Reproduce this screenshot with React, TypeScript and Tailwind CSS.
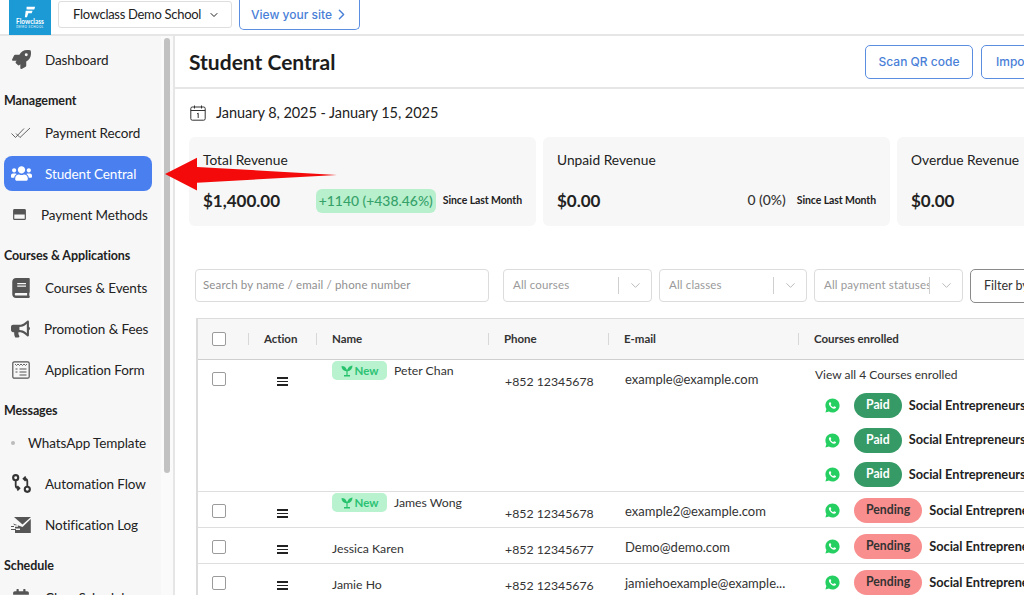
import { ChevronDown, ChevronRight } from 'lucide-react';
import { FaBook, FaBullhorn, FaCalendarAlt, FaRocket, FaUsers } from 'react-icons/fa';
import { RiWhatsappFill } from 'react-icons/ri';

function CheckIcon() {
  return (
    <svg viewBox="0 0 20 12" className="h-[12px] w-[20px]" fill="none" stroke="#555" strokeWidth="0.9">
      <path d="M0.500 6.500l4 4L13 1.500" />
      <path d="M5 6.500l4 4L19 1" />
    </svg>
  );
}

function CardIcon() {
  return (
    <svg viewBox="0 0 14 12" className="h-[11px] w-[13px]" fill="#555">
      <path d="M1.500 0h11A1.500 1.500 0 0 1 14 1.500v9a1.500 1.500 0 0 1-1.500 1.500h-11A1.500 1.500 0 0 1 0 10.500v-9A1.500 1.500 0 0 1 1.500 0zM1.300 6v4.700h11.400V6z" />
    </svg>
  );
}

function FormIcon() {
  return (
    <svg viewBox="0 0 18 18" className="h-[18px] w-[18px]" fill="none" stroke="#555" strokeWidth="1.2">
      <rect x="0.800" y="0.800" width="16.400" height="16.400" rx="1.500" />
      <path d="M3 3l1.500 1.500L6 3l1.500 1.500L9 3l1.500 1.500L12 3l1.500 1.500L15 3" strokeWidth="0.9" />
      <path d="M3.500 8h2M7.500 8h7M3.500 11h2M7.500 11h7M7.500 14h7" />
    </svg>
  );
}

function FlowIcon() {
  return (
    <svg viewBox="0 0 18 18" className="h-[19px] w-[19px]" fill="none" stroke="#333" strokeWidth="2">
      <circle cx="3.500" cy="3.500" r="2.400" />
      <circle cx="14.500" cy="14.500" r="2.400" />
      <path d="M3.500 6v5q0 2.500 2.500 2.500h1M5 11.500l2 2-2 2" strokeWidth="1.700" />
      <path d="M14.500 12V7q0-2.500-2.500-2.500h-1M13 2.500l-2 2 2 2" strokeWidth="1.700" />
    </svg>
  );
}

function MailIcon() {
  return (
    <svg viewBox="0 0 20 16" className="h-[16px] w-[20px]" fill="#555">
      <path d="M3 0h17L11.500 7.500z" />
      <path d="M19.800 2v14H4v-3h5v-1.500H4V9.800h3V8.300H3.500L2 6.500l9.500 3.500z" />
      <path d="M0 9h3v1H0zM0 12h5v1H0z" />
    </svg>
  );
}

function SproutIcon() {
  return (
    <svg viewBox="0 0 12 12" className="h-[12px] w-[12px]" fill="#27c26c">
      <path d="M0.500 1C3 1 5 2 5.500 4.500h1C7 2 9 1 11.500 0.500 11.500 4 9.500 6 6.600 6.200V10H9v1.500H3V10h2.400V6.200C2.500 6 0.500 4 0.500 1z" />
    </svg>
  );
}

function HamburgerIcon() {
  return (
    <div className="flex w-[11px] flex-col gap-[2px]">
      <div className="h-[1.5px] bg-[#222]" />
      <div className="h-[1.5px] bg-[#222]" />
      <div className="h-[1.5px] bg-[#222]" />
    </div>
  );
}

function Box() {
  return <div className="h-[14px] w-[14px] rounded-[2px] border-[1.5px] border-[#9b9b9b] bg-white" />;
}

function NavItem({ icon, label, gap = 'w-[41px]', active = false }: { icon: React.ReactNode; label: string; gap?: string; active?: boolean }) {
  return (
    <div className={`flex h-[35px] shrink-0 items-center rounded-lg text-[13.5px] tracking-[-0.1px] ${active ? 'bg-[#4a7ff0] text-white' : 'text-[#222]'}`}>
      <div className={`flex shrink-0 items-center justify-center pr-[7px] ${gap}`}>{icon}</div>
      <span className="pt-[2px] whitespace-nowrap">{label}</span>
    </div>
  );
}

function Heading({ children }: { children: React.ReactNode }) {
  return (
    <div className="mt-[6px] -mb-[4px] flex h-[24px] shrink-0 items-center text-[12.5px] font-bold tracking-[-0.1px] whitespace-nowrap text-[#222]">
      {children}
    </div>
  );
}

function Sidebar() {
  return (
    <aside className="flex w-[175px] shrink-0 border-r-2 border-[#e6e6e6] bg-[#f7f7f7]">
      <nav className="flex w-[161px] shrink-0 flex-col gap-[6px] overflow-hidden pt-[6px] pl-[4px] pr-[9px]">
        <NavItem icon={<FaRocket className="h-[19px] w-[19px] text-[#555]" />} label="Dashboard" />
        <Heading>Management</Heading>
        <NavItem icon={<CheckIcon />} label="Payment Record" />
        <NavItem icon={<FaUsers className="h-[21px] w-[21px] text-white" />} label="Student Central" active />
        <NavItem icon={<CardIcon />} label="Payment Methods" gap="w-[37px]" />
        <Heading>Courses &amp; Applications</Heading>
        <NavItem icon={<FaBook className="h-[20px] w-[18px] text-[#555]" />} label="Courses & Events" />
        <NavItem icon={<FaBullhorn className="h-[18px] w-[19px] text-[#555]" />} label="Promotion & Fees" gap="w-[40px]" />
        <NavItem icon={<FormIcon />} label="Application Form" />
        <Heading>Messages</Heading>
        <NavItem icon={<div className="h-[4px] w-[4px] rounded-full bg-[#bbb]" />} label="WhatsApp Template" gap="w-[24px]" />
        <NavItem icon={<FlowIcon />} label="Automation Flow" />
        <NavItem icon={<MailIcon />} label="Notification Log" />
        <Heading>Schedule</Heading>
        <NavItem icon={<FaCalendarAlt className="h-[18px] w-[18px] text-[#555]" />} label="Class Schedule" />
      </nav>
      <div className="w-[12px] shrink-0 bg-[#fafafa] pt-[2px] pl-[3px]">
        <div className="h-[435px] w-[6px] rounded-full bg-[#c2c2c2]" />
      </div>
    </aside>
  );
}

function TopBar() {
  return (
    <header className="flex h-[36px] shrink-0 items-start gap-[7px] border-b-2 border-[#e6e6e6] bg-white pl-[9px]">
      <div className="flex h-[35px] w-[42px] shrink-0 flex-col items-center justify-end bg-[#1b9ad6] pb-[6px] text-white">
        <svg viewBox="0 0 14 14" className="h-[12px] w-[12px]" fill="white">
          <path d="M3 1h10l-1 3H3zM2 5.500h8l-1 3H5L3.500 13H1z" />
        </svg>
        <div className="text-[6.5px] font-bold leading-[7px]">Flowclass</div>
        <div className="text-[3px] leading-[4px] tracking-[0.5px] whitespace-nowrap">DEMO SCHOOL</div>
      </div>
      <div className="mt-[1px] flex h-[27px] w-[174px] shrink-0 items-center gap-[7px] rounded-[3px] border border-[#dedede] pl-[14px] text-[13px] tracking-[-0.3px] text-[#222]">
        <span className="whitespace-nowrap">Flowclass Demo School</span>
        <ChevronDown className="h-[12px] w-[12px] shrink-0" />
      </div>
      <div className="flex h-[30px] w-[121px] shrink-0 items-center justify-between rounded-b-[5px] border border-t-0 border-[#5b8de0] pl-[11px] pr-[9px] font-['Inter',sans-serif] text-[12px] font-medium text-[#4a7fd8]">
        <span className="whitespace-nowrap">View your site</span>
        <ChevronRight className="h-[17px] w-[17px] shrink-0" />
      </div>
    </header>
  );
}

function StatCard({ title, value, delta, positive = false }: { title: string; value: string; delta?: string; positive?: boolean }) {
  return (
    <div className="flex h-[89px] w-[347px] shrink-0 flex-col rounded-md bg-[#f7f7f7] px-[14px] pt-[14px]">
      <div className="text-[13.75px] leading-[18px] whitespace-nowrap text-[#222]">{title}</div>
      <div className="mt-[19px] flex h-[25px] items-center">
        <span className="text-[17px] font-bold text-[#222]">{value}</span>
        {delta && (
          <div className="ml-auto flex items-center gap-[7px]">
            <span className={positive ? 'rounded-md bg-[#b8efcd] px-[3px] py-[3px] text-[13.9px] leading-[18px] font-medium text-[#35a26a]' : 'pr-[4px] text-[13.9px] font-medium text-[#333]'}>
              {delta}
            </span>
            <span className="pt-[1px] text-[10.5px] font-bold tracking-[-0.1px] whitespace-nowrap text-[#222]">Since Last Month</span>
          </div>
        )}
      </div>
    </div>
  );
}

function SelectBox({ label, width }: { label: string; width: string }) {
  return (
    <div className={`flex h-[33px] shrink-0 items-center rounded-[4px] border border-[#dcdcdc] text-[11.5px] tracking-[0.15px] text-[#9a9a9a] ${width}`}>
      <span className="min-w-0 flex-1 overflow-hidden pb-[1px] pl-[9px] whitespace-nowrap">{label}</span>
      <div className="h-[17px] w-px shrink-0 bg-[#cfcfcf]" />
      <div className="flex w-[32px] shrink-0 justify-center">
        <ChevronDown className="h-[15px] w-[15px] text-[#b5b5b5]" strokeWidth={1.5} />
      </div>
    </div>
  );
}

const COLS = 'grid grid-cols-[50px_68px_172px_120px_190px_400px]';

function HeadCell({ children }: { children: React.ReactNode }) {
  return (
    <div className="flex items-center">
      <div className="h-[12px] w-px bg-[#d8d8d8]" />
      <div className="pl-[15px] text-[11.5px] font-bold tracking-[-0.05px] whitespace-nowrap text-[#333]">{children}</div>
    </div>
  );
}

function CourseLine({ status }: { status: 'Paid' | 'Pending' }) {
  return (
    <div className="flex items-center">
      <div className="flex w-[43px] shrink-0 justify-end">
        <RiWhatsappFill className="h-[17px] w-[17px] text-[#25cf62]" />
      </div>
      <div
        className={`ml-[13px] flex h-[25px] items-center rounded-full px-[12px] text-[12.25px] font-bold ${
          status === 'Paid' ? 'bg-[#359a66] text-white' : 'bg-[#f98e8e] text-[#333]'
        }`}
      >
        {status}
      </div>
      <span className="ml-[7px] text-[12.75px] font-bold whitespace-nowrap text-[#222]">Social Entrepreneurship</span>
    </div>
  );
}

function NewBadge() {
  return (
    <div className="flex h-[19px] w-[55px] items-center justify-center gap-[2px] rounded-[5px] bg-[#b8f2cf] text-[11.5px] font-bold text-[#2cc274]">
      <SproutIcon />
      New
    </div>
  );
}

type Row = { name: string; isNew?: boolean; phone: string; email: string };

const ROWS: Row[] = [
  { name: 'James Wong', isNew: true, phone: '+852 12345678', email: 'example2@example.com' },
  { name: 'Jessica Karen', phone: '+852 12345677', email: 'Demo@demo.com' },
  { name: 'Jamie Ho', phone: '+852 12345676', email: 'jamiehoexample@example...' },
];

function RowCells({ row }: { row: Row }) {
  return (
    <>
      <div className="pt-[12px] pl-[14px]">
        <Box />
      </div>
      <div className="flex justify-center pt-[17px]">
        <HamburgerIcon />
      </div>
      <div className="flex items-start gap-[7px] pl-[16px] text-[12.25px] text-[#333]">
        {row.isNew ? (
          <>
            <div className="pt-[1px]">
              <NewBadge />
            </div>
            <span className="pt-[2px] whitespace-nowrap">{row.name}</span>
          </>
        ) : (
          <span className="pt-[12px] whitespace-nowrap">{row.name}</span>
        )}
      </div>
      <div className="pt-[13px] pl-[17px] text-[12.3px] whitespace-nowrap text-[#333]">{row.phone}</div>
      <div className="pt-[10px] pl-[17px] text-[13px] whitespace-nowrap text-[#333]">{row.email}</div>
    </>
  );
}

function StudentTable() {
  return (
    <div className="mt-[15px] ml-[1px] w-[900px] border-l-2 border-t border-[#dcdcdc]">
      <div className={`${COLS} h-[41px] border-b border-[#cfcfcf] bg-[#f7f7f7] pb-[1px]`}>
        <div className="flex items-center pl-[14px]">
          <Box />
        </div>
        <HeadCell>Action</HeadCell>
        <HeadCell>Name</HeadCell>
        <HeadCell>Phone</HeadCell>
        <HeadCell>E-mail</HeadCell>
        <HeadCell>Courses enrolled</HeadCell>
      </div>
      <div className={`${COLS} h-[132px] border-b border-[#dedede]`}>
        <RowCells row={{ name: 'Peter Chan', isNew: true, phone: '+852 12345678', email: 'example@example.com' }} />
        <div className="flex flex-col">
          <div className="pt-[7px] pl-[17px] text-[12px] leading-[15px] whitespace-nowrap text-[#333]">View all 4 Courses enrolled</div>
          <div className="mt-[11px] flex flex-col gap-[9.5px]">
            <CourseLine status="Paid" />
            <CourseLine status="Paid" />
            <CourseLine status="Paid" />
          </div>
        </div>
      </div>
      {ROWS.map((row) => (
        <div key={row.name} className={`${COLS} h-[36px] border-b border-[#dedede]`}>
          <RowCells row={row} />
          <div className="pt-[6px]">
            <CourseLine status="Pending" />
          </div>
        </div>
      ))}
    </div>
  );
}

function HeaderButton({ label, className }: { label: string; className: string }) {
  return (
    <div className={`flex h-[34px] w-[108px] shrink-0 items-center rounded-[5px] border border-[#5b8de0] font-['Inter',sans-serif] text-[12px] font-medium whitespace-nowrap text-[#4a7fd8] ${className}`}>
      {label}
    </div>
  );
}

function Main() {
  return (
    <main className="flex min-w-0 flex-1 flex-col overflow-hidden bg-white">
      <div className="flex h-[53px] shrink-0 items-center border-b-2 border-[#e6e6e6] pl-[14px]">
        <h1 className="text-[21px] font-bold whitespace-nowrap text-[#1c1c1c]">Student Central</h1>
        <div className="ml-auto flex w-[159px] shrink-0 gap-[8px]">
          <HeaderButton label="Scan QR code" className="justify-center" />
          <HeaderButton label="Import" className="pl-[14px]" />
        </div>
      </div>
      <div className="flex flex-col pl-[14px]">
        <div className="flex h-[48px] items-center gap-[10px] pl-[1px]">
          <svg viewBox="0 0 16 16" className="h-[16px] w-[16px]" fill="none" stroke="#333" strokeWidth="1">
            <rect x="0.800" y="2" width="14.400" height="13.200" rx="1.500" />
            <path d="M0.800 5.500h14.400M4.500 0.500v3M11.500 0.500v3" />
            <path d="M7 9l1.200-.8V13" />
          </svg>
          <span className="text-[14.5px] tracking-[-0.05px] whitespace-nowrap text-[#222]">January 8, 2025 - January 15, 2025</span>
        </div>
        <div className="flex gap-[7px]">
          <StatCard title="Total Revenue" value="$1,400.00" delta="+1140 (+438.46%)" positive />
          <StatCard title="Unpaid Revenue" value="$0.00" delta="0 (0%)" />
          <StatCard title="Overdue Revenue" value="$0.00" />
        </div>
        <div className="mt-[43px] flex gap-[7px] pl-[6px]">
          <div className="mr-[7px] flex h-[33px] w-[294px] shrink-0 items-center rounded-[4px] border border-[#dcdcdc] pb-[1px] pl-[7px] text-[11.5px] tracking-[0.15px] whitespace-nowrap text-[#8f8f8f]">
            Search by name / email / phone number
          </div>
          <SelectBox label="All courses" width="w-[149px]" />
          <SelectBox label="All classes" width="w-[148px]" />
          <SelectBox label="All payment statuses" width="w-[149px]" />
          <div className="flex h-[34px] w-[100px] shrink-0 items-center rounded-[5px] border border-[#8a8a8a] pl-[13px] text-[12.5px] whitespace-nowrap text-[#333]">
            Filter by
          </div>
        </div>
        <div className="pl-[6px]">
          <StudentTable />
        </div>
      </div>
    </main>
  );
}

export default function App() {
  return (
    <div className="relative flex h-[595px] w-[1024px] flex-col overflow-hidden bg-white font-['Lato',sans-serif]">
      <TopBar />
      <div className="flex min-h-0 flex-1">
        <Sidebar />
        <Main />
      </div>
      {/* red annotation arrow over the page */}
      <svg viewBox="0 0 172 38" className="absolute top-[157px] left-[165px] h-[38px] w-[172px]" fill="#f40a0a">
        <path d="M0 17L32 0.700V10L172 18 32 25.700V33.600z" />
      </svg>
    </div>
  );
}
